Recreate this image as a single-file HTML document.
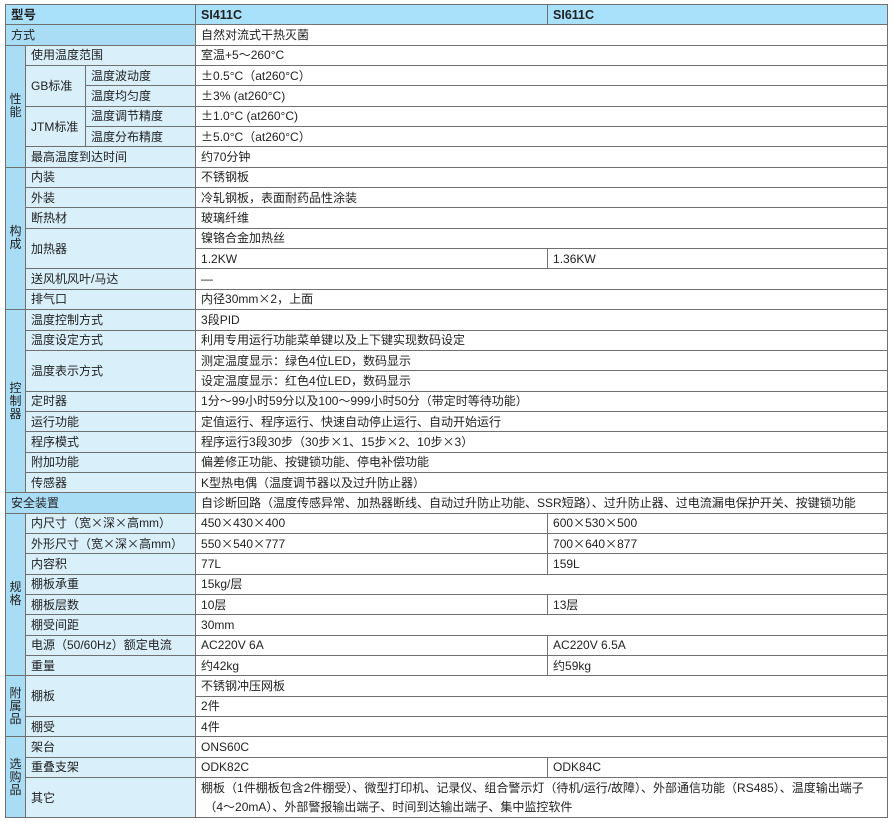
<!DOCTYPE html>
<html><head><meta charset="utf-8"><style>
html,body{margin:0;padding:0;background:#fff;width:893px;height:822px;overflow:hidden}
table{position:absolute;left:5px;top:4px;width:882px;height:814px;border-collapse:collapse;table-layout:fixed;font-family:"Liberation Sans","Noto Sans CJK SC",sans-serif;font-size:12px;color:#222}
td{border:1px solid #707070;padding:0 0 0 5px;height:19px;line-height:14px;white-space:nowrap;overflow:hidden;background:#fff;vertical-align:middle}
.h td{background:#a9e0fa;font-weight:bold;font-size:12.5px}
.g{background:#a9dcf5;text-align:center;padding:0;white-space:normal;line-height:13px}
.l{background:#d9effa}
.t{background:#a9dcf5}
.c{font-family:"Noto Sans CJK SC",sans-serif}
</style></head><body>
<table>
<colgroup><col style="width:20px"><col style="width:60px"><col style="width:110px"><col style="width:352px"><col style="width:340px"></colgroup>
<tr class="h"><td colspan="3">型号</td><td>SI411C</td><td>SI611C</td></tr>
<tr><td colspan="3" class="t">方式</td><td colspan="2">自然对流式干热灭菌</td></tr>
<tr><td rowspan="6" class="g">性<br>能</td><td colspan="2" class="l">使用温度范围</td><td colspan="2">室温+5～260°C</td></tr>
<tr><td rowspan="2" class="l">GB标准</td><td class="l">温度波动度</td><td colspan="2"><span class="c">±</span>0.5°C（at260°C）</td></tr>
<tr><td class="l">温度均匀度</td><td colspan="2"><span class="c">±</span>3% (at260°C)</td></tr>
<tr><td rowspan="2" class="l">JTM标准</td><td class="l">温度调节精度</td><td colspan="2"><span class="c">±</span>1.0°C (at260°C)</td></tr>
<tr><td class="l">温度分布精度</td><td colspan="2"><span class="c">±</span>5.0°C（at260°C）</td></tr>
<tr><td colspan="2" class="l">最高温度到达时间</td><td colspan="2">约70分钟</td></tr>
<tr><td rowspan="7" class="g">构<br>成</td><td colspan="2" class="l">内装</td><td colspan="2">不锈钢板</td></tr>
<tr><td colspan="2" class="l">外装</td><td colspan="2">冷轧钢板，表面耐药品性涂装</td></tr>
<tr><td colspan="2" class="l">断热材</td><td colspan="2">玻璃纤维</td></tr>
<tr><td colspan="2" rowspan="2" class="l">加热器</td><td colspan="2">镍铬合金加热丝</td></tr>
<tr><td>1.2KW</td><td>1.36KW</td></tr>
<tr><td colspan="2" class="l">送风机风叶/马达</td><td colspan="2">—</td></tr>
<tr><td colspan="2" class="l">排气口</td><td colspan="2">内径30mm<span class="c">×</span>2，上面</td></tr>
<tr><td rowspan="9" class="g">控<br>制<br>器</td><td colspan="2" class="l">温度控制方式</td><td colspan="2">3段PID</td></tr>
<tr><td colspan="2" class="l">温度设定方式</td><td colspan="2">利用专用运行功能菜单键以及上下键实现数码设定</td></tr>
<tr><td colspan="2" rowspan="2" class="l">温度表示方式</td><td colspan="2">测定温度显示：绿色4位LED，数码显示</td></tr>
<tr><td colspan="2">设定温度显示：红色4位LED，数码显示</td></tr>
<tr><td colspan="2" class="l">定时器</td><td colspan="2">1分～99小时59分以及100～999小时50分（带定时等待功能）</td></tr>
<tr><td colspan="2" class="l">运行功能</td><td colspan="2">定值运行、程序运行、快速自动停止运行、自动开始运行</td></tr>
<tr><td colspan="2" class="l">程序模式</td><td colspan="2">程序运行3段30步（30步<span class="c">×</span>1、15步<span class="c">×</span>2、10步<span class="c">×</span>3）</td></tr>
<tr><td colspan="2" class="l">附加功能</td><td colspan="2">偏差修正功能、按键锁功能、停电补偿功能</td></tr>
<tr><td colspan="2" class="l">传感器</td><td colspan="2">K型热电偶（温度调节器以及过升防止器）</td></tr>
<tr><td colspan="3" class="t">安全装置</td><td colspan="2">自诊断回路（温度传感异常、加热器断线、自动过升防止功能、SSR短路）、过升防止器、过电流漏电保护开关、按键锁功能</td></tr>
<tr><td rowspan="8" class="g">规<br>格</td><td colspan="2" class="l">内尺寸（宽<span class="c">×</span>深<span class="c">×</span>高mm）</td><td>450<span class="c">×</span>430<span class="c">×</span>400</td><td>600<span class="c">×</span>530<span class="c">×</span>500</td></tr>
<tr><td colspan="2" class="l">外形尺寸（宽<span class="c">×</span>深<span class="c">×</span>高mm）</td><td>550<span class="c">×</span>540<span class="c">×</span>777</td><td>700<span class="c">×</span>640<span class="c">×</span>877</td></tr>
<tr><td colspan="2" class="l">内容积</td><td>77L</td><td>159L</td></tr>
<tr><td colspan="2" class="l">棚板承重</td><td colspan="2">15kg/层</td></tr>
<tr><td colspan="2" class="l">棚板层数</td><td>10层</td><td>13层</td></tr>
<tr><td colspan="2" class="l">棚受间距</td><td colspan="2">30mm</td></tr>
<tr><td colspan="2" class="l">电源（50/60Hz）额定电流</td><td>AC220V 6A</td><td>AC220V 6.5A</td></tr>
<tr><td colspan="2" class="l">重量</td><td>约42kg</td><td>约59kg</td></tr>
<tr><td rowspan="3" class="g">附<br>属<br>品</td><td colspan="2" rowspan="2" class="l">棚板</td><td colspan="2">不锈钢冲压网板</td></tr>
<tr><td colspan="2">2件</td></tr>
<tr><td colspan="2" class="l">棚受</td><td colspan="2">4件</td></tr>
<tr><td rowspan="4" class="g">选<br>购<br>品</td><td colspan="2" class="l">架台</td><td colspan="2">ONS60C</td></tr>
<tr><td colspan="2" class="l">重叠支架</td><td>ODK82C</td><td>ODK84C</td></tr>
<tr><td colspan="2" rowspan="2" class="l">其它</td><td colspan="2" style="border-bottom:none">棚板（1件棚板包含2件棚受）、微型打印机、记录仪、组合警示灯（待机/运行/故障）、外部通信功能（RS485）、温度输出端子</td></tr>
<tr><td colspan="2" style="border-top:none">&nbsp;（4～20mA）、外部警报输出端子、时间到达输出端子、集中监控软件</td></tr>
</table>
</body></html>
